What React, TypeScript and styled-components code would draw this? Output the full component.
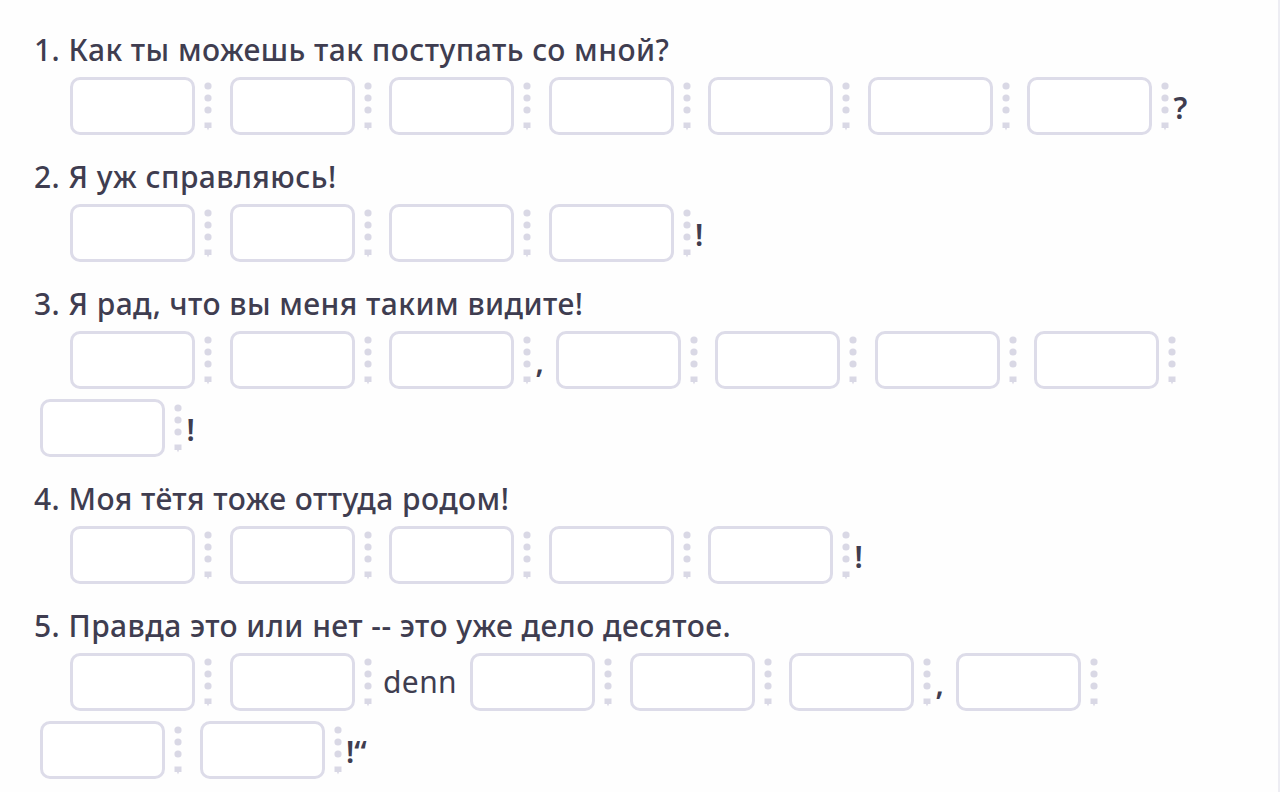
import React from 'react';
import styled, { createGlobalStyle } from 'styled-components';

const GlobalStyle = createGlobalStyle`
  html, body {
    margin: 0;
    padding: 0;
    background: #fefefe;
  }
  body {
    font-family: "Noto Sans", "Open Sans", sans-serif;
    color: #3f3d50;
  }
`;

type Part = { kind: 'slot' } | { kind: 'punct'; text: string } | { kind: 'word'; text: string };

const S: Part = { kind: 'slot' };
const p = (text: string): Part => ({ kind: 'punct', text });
const w = (text: string): Part => ({ kind: 'word', text });

const exercises: { title: string; parts: Part[] }[] = [
  { title: '1. Как ты можешь так поступать со мной?', parts: [S, S, S, S, S, S, S, p('?')] },
  { title: '2. Я уж справляюсь!', parts: [S, S, S, S, p('!')] },
  { title: '3. Я рад, что вы меня таким видите!', parts: [S, S, S, p(','), S, S, S, S, S, p('!')] },
  { title: '4. Моя тётя тоже оттуда родом!', parts: [S, S, S, S, S, p('!')] },
  {
    title: '5. Правда это или нет -- это уже дело десятое.',
    parts: [S, S, w('denn'), S, S, S, p(','), S, S, S, p('!“')],
  },
];

const Page = styled.div`
  min-height: 792px;
  box-sizing: border-box;
  padding: 32px 38px 0 34px;
  border-right: 2px solid #ededf3;
`;

const Exercise = styled.section`
  margin-bottom: 24px;
`;

const Title = styled.h2`
  margin: 0 0 9px;
  font-size: 30px;
  line-height: 36px;
  font-weight: 500;
  letter-spacing: 0.45px;
  color: #3f3d50;
`;

const Answers = styled.div`
  display: flex;
  flex-wrap: wrap;
  align-items: center;
  row-gap: 10px;
  padding-left: 6px;
  width: 1200px;

  & > :first-child {
    margin-left: 30px;
  }
`;

const Slot = styled.div`
  display: flex;
  align-items: stretch;
  margin-right: 15.5px;
`;

const Box = styled.input`
  box-sizing: border-box;
  width: 125px;
  height: 58px;
  border: 3px solid #dddce9;
  border-radius: 10px;
  background: #fff;
  outline: none;
  padding: 0 10px;
  font: inherit;
`;

const Handle = styled.svg`
  margin-left: 7px;
  width: 12px;
  height: 58px;
`;

const Punct = styled.span`
  margin: 0 12px 0 -13px;
  font-size: 30px;
  font-weight: 600;
  line-height: 36px;
  color: #3f3d50;
  padding-top: 4px;
`;

const Word = styled.span`
  margin: 0 13px 0 -6px;
  font-size: 30px;
  font-weight: 400;
  letter-spacing: 0.4px;
  line-height: 36px;
  color: #3f3d50;
`;

const DotsHandle: React.FC = () => (
  <Handle viewBox="0 0 12 58">
    <g fill="#d9d8e5">
      <circle cx="6" cy="9" r="3.6" />
      <circle cx="6" cy="21" r="3.6" />
      <circle cx="6" cy="33" r="3.6" />
      <path d="M2.5 45.5h7v5.5h-2.5l-1 2.5-1-2.5h-2.5z" />
    </g>
  </Handle>
);

const App: React.FC = () => {
  return (
    <>
      <GlobalStyle />
      <Page>
        {exercises.map((ex) => (
          <Exercise key={ex.title}>
            <Title>{ex.title}</Title>
            <Answers>
              {ex.parts.map((part, i) => {
                if (part.kind === 'slot') {
                  return (
                    <Slot key={i}>
                      <Box type="text" aria-label={`слово ${i + 1}`} />
                      <DotsHandle />
                    </Slot>
                  );
                }
                if (part.kind === 'word') return <Word key={i}>{part.text}</Word>;
                return <Punct key={i}>{part.text}</Punct>;
              })}
            </Answers>
          </Exercise>
        ))}
      </Page>
    </>
  );
};

export default App;
